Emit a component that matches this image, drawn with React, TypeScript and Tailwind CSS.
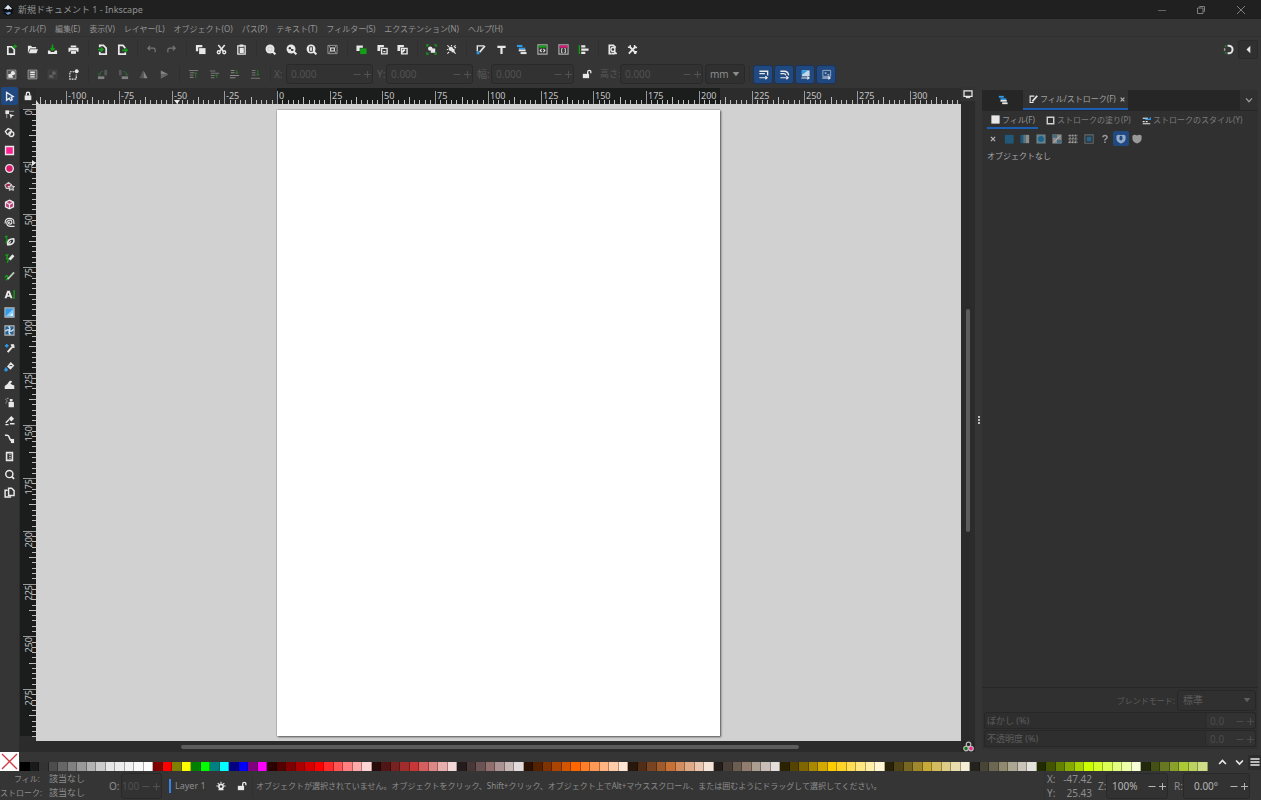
import React from 'react';

const W = '#e8e8e8';
const G = '#12a016';
const B = '#2f9bea';
const P = '#ff1f8f';

const shapes: Record<string, React.ReactNode> = {
  newDoc: (<><path d="M2 3h4l3 3v5H2z" fill="none" stroke={W} strokeWidth="1.9" /><path d="M9.800.5v4.500M7.500 2.700h4.500" stroke={G} strokeWidth="1.500" /></>),
  open: (<><path d="M1 10V2h3.500l1 1.300H10V5H3.200z" fill={W} /><path d="M3.600 5.800H12L10.300 10H2z" fill={W} /></>),
  save: (<><path d="M1 7h2.300l1 1.600h3.400L8.700 7H11v4H1z" fill={W} /><path d="M6 .5v6M3.800 4.500 6 6.800l2.200-2.300" stroke={G} strokeWidth="1.700" fill="none" /></>),
  print: (<><path d="M3 1.500h6v2H3zM.5 4.200h11v4.300H9.500V7h-7v1.500h-2z" fill={W} /><path d="M3.300 7.700h5.400v3H3.300z" fill={W} /></>),
  importDoc: (<><path d="M3 3.500V1.500h4l3 3V11H3V8.500" fill="none" stroke={W} strokeWidth="1.900" /><path d="M1 6h5M4.300 4l2.200 2-2.200 2" fill="none" stroke={G} strokeWidth="1.600" /></>),
  exportDoc: (<><path d="M9 4.500 6.500 1.500H2V11h7V9" fill="none" stroke={W} strokeWidth="1.900" /><path d="M5.500 6.800h5M9 4.800l2.200 2L9 8.800" fill="none" stroke={G} strokeWidth="1.600" /></>),
  undo: <path d="M4.500 2 2 4.500 4.500 7M2 4.500h6q2 0 2 2V9" fill="none" stroke="#777" strokeWidth="1.300" />,
  redo: <path d="M7.500 2 10 4.500 7.500 7M10 4.500H4q-2 0-2 2V9" fill="none" stroke="#777" strokeWidth="1.300" />,
  copy: (<><path d="M1 1h7v2.500H3.500V8H1z" fill={W} /><path d="M4.500 4.500H11.500V11H4.500z" fill={W} /></>),
  cut: (<><path d="M2.500 1 8 8M9.500 1 4 8" stroke={W} strokeWidth="1.700" /><circle cx="3" cy="9" r="1.600" fill="none" stroke={W} strokeWidth="1.500" /><circle cx="9" cy="9" r="1.600" fill="none" stroke={W} strokeWidth="1.500" /></>),
  paste: (<><path d="M2 2h8v9H2z" fill="none" stroke={W} strokeWidth="1.400" /><path d="M4 .500h4V3H4zM4 4.200h4.500v5.500H4z" fill={W} /></>),
  zoomSel: (<><circle cx="5.500" cy="5.500" r="4.900" fill={W} /><path d="m8.500 8.500 2.800 2.800" stroke={W} strokeWidth="2.200" /><path d="M3.500 3.500h4v4h-4z" fill="none" stroke="#bbb" strokeWidth=".6" /></>),
  zoomDraw: (<><circle cx="5.500" cy="5.500" r="4.900" fill={W} /><path d="m8.500 8.500 2.800 2.800" stroke={W} strokeWidth="2.200" /><circle cx="4.200" cy="4.500" r="1.300" fill="#333" /><path d="M5.500 5.500h2.500v2H5.500z" fill="#333" /></>),
  zoomPage: (<><circle cx="5.500" cy="5.500" r="4.900" fill={W} /><path d="m8.500 8.500 2.800 2.800" stroke={W} strokeWidth="2.200" /><path d="M4 3h3v5H4z" fill={W} stroke="#333" strokeWidth="1" /></>),
  zoomFit: (<><path d="M1 1.500h10v9H1z" fill="none" stroke="#999" strokeWidth="1" /><path d="M4 4.300h4v3.400H4z" fill="none" stroke={W} strokeWidth="1.200" /><path d="m2 2.500 1.500 1.300M10 2.500 8.500 3.800M2 9.500l1.500-1.300M10 9.500 8.500 8.200" stroke="#bbb" /></>),
  dup: (<><path d="M.5 1.500h7V4H4v3.500H.5z" fill={W} /><path d="M4.500 4.800h7V11h-7z" fill={G} /></>),
  clone: (<><path d="M.5 1h7v2.500H3.500V7.500H.5z" fill={W} /><path d="M5 4.800h6v6H5z" fill="none" stroke={W} strokeWidth="1.500" /><path d="M6.800 7.500h2.500v1.500H6.800z" fill={W} /></>),
  unclone: (<><path d="M.5 1h7v2.500H3.500V7.500H.5z" fill={W} /><path d="M5 4.800h6v6H5z" fill="none" stroke={W} strokeWidth="1.500" /><path d="m5.500 9 3-3" stroke={W} strokeWidth="2" /></>),
  group: (<><path d="M1 3V1h2M9 1h2v2M11 9v2H9M3 11H1V9" stroke={G} strokeWidth="1.500" fill="none" /><circle cx="4.600" cy="5" r="2.400" fill={W} /><path d="M6 5h4v4.500H5z" fill={W} /></>),
  ungroup: (<><path d="m1.500 1.500 2 2M10.500 1.500l-2 2M1.500 10.500l2-2M10.500 10.500l-2-2M6 1v1.500M1 6h1.500M9.500 4H11" stroke={W} strokeWidth="1.200" /><circle cx="5.300" cy="5.300" r="2.400" fill={W} /><path d="M6 5.300h3.300V9H6z" fill={W} /></>),
  fill: (<><path d="M2.500 8V2H10" fill="none" stroke={W} strokeWidth="1.500" /><path d="M10.800 2.200 5 9" stroke={W} strokeWidth="2" /><path d="M1.800 8h3v3.200h-3z" fill={B} /></>),
  fillSmall: (<><path d="M6 10H1.500V1.500H7" fill="none" stroke={W} strokeWidth="1.500" /><path d="M11 1 4.500 8.500" stroke={W} strokeWidth="2.200" /></>),
  text: <path d="M1.500 1.800h9v2.500H7.200v6.500H4.800V4.300H1.500z" fill={W} />,
  layers: (<><path d="M1 1h6v2.300H1z" fill={B} /><path d="M3 4h7v2H3z" fill={B} /><path d="M3 6h7.500v2H3z" fill={W} /><path d="M5 8.800h6.500V11H5z" fill={W} /></>),
  xml: (<><path d="M1 1h10v10H1z" fill="none" stroke="#aaa" strokeWidth="1.300" /><path d="M1.600 1.600h8.800v2.400H1.600z" fill={G} /><path d="M5 5.300 3.500 7 5 8.800M7 5.300 8.500 7 7 8.800" fill="none" stroke={W} strokeWidth="1.200" /></>),
  selectors: (<><path d="M1 1h10v10H1z" fill="none" stroke="#aaa" strokeWidth="1.300" /><path d="M1.600 1.600h8.800v2.400H1.600z" fill="#e0187c" /><path d="M5 5H4v4.500h1M7 5h1v4.500H7" fill="none" stroke={W} /></>),
  align: (<><path d="M1.500 1v10" stroke={G} strokeWidth="1.500" /><path d="M3.500 1.300H8v2.400H3.500zM3.500 4.800H11.500v2.500h-8zM3.500 8.400H8v2.400H3.500z" fill={W} /></>),
  docProps: (<><path d="M5 10.500H2.500v-9H7l2.500 2.500" fill="none" stroke={W} strokeWidth="1.800" /><circle cx="6.500" cy="6" r="2.200" fill="none" stroke={W} strokeWidth="1.500" /><path d="m7.500 7.500 3 3.300M5 10.500h4" stroke={W} strokeWidth="1.700" /></>),
  prefs: (<><path d="m3 3 7 7.500M9.500 2.500 2 10.500" stroke={W} strokeWidth="2" /><path d="M1 3.500h2.500V1M8.200 1v2.800H11M11 8.500H8.500V11" fill="none" stroke={W} strokeWidth="1.500" /></>),
  selAll: (<><path d="M1.200 1.200h9.600v9.600H1.200z" fill="#555" stroke="#999" /><circle cx="7.500" cy="4.500" r="2.300" fill={W} /><path d="M2.500 5.500H6l2 4H2.500z" fill={W} /></>),
  selLayers: (<><path d="M1.200 1.200h9.600v9.600H1.200z" fill="#555" stroke="#999" /><path d="M3.500 2.800h5v1.500h-5zM3.500 5.300h5v1.500h-5zM3.500 7.800h5v1.500h-5z" fill={W} /></>),
  desel: (<><path d="M1.200 1.200h9.600v9.600H1.200z" fill="#3c3c3c" stroke="#444" /><circle cx="7.500" cy="4.500" r="2" fill="#626262" /><path d="M2.500 6.500H6l1.500 3h-5z" fill="#626262" /></>),
  touch: (<><path d="M7 3H2v8h7V6" fill="none" stroke={W} strokeWidth="1.300" strokeDasharray="2 1" /><circle cx="9.500" cy="2.500" r="2.100" fill={W} /></>),
  rotL: (<><path d="M1 8h7v3H1z" fill="#808080" /><path d="M8 1h3v6H8z" fill="#555" /><path d="M2.500 6.500q0-4 4-4M1 5l1.500 2L4.500 5" stroke="#2d6a30" fill="none" /></>),
  rotR: (<><path d="M4 8h7v3H4z" fill="#808080" /><path d="M1 1h3v6H1z" fill="#555" /><path d="M9.500 6.500q0-4-4-4M11 5 9.500 7 7.500 5" stroke="#2d6a30" fill="none" /></>),
  flipH: (<><path d="M5.500 1.500V10H1.500z" fill="#555" /><path d="M6 1.500V10h4.500z" fill="#858585" /></>),
  flipV: (<><path d="M2 6h8.500L2 1.500z" fill="#858585" /><path d="M2 6h8.500L2 10.500z" fill="#666" /></>),
  top: (<><path d="M1 1h10v1.200H1zM2 3.500h5v1.200H2zM2 6h4v1.200H2zM2 8.500h4v1.200H2z" fill="#777" /><path d="M8.500 10V4M7 5.500 8.500 4 10 5.500" stroke="#2d7a30" fill="none" /></>),
  raise: (<><path d="M1 1.500h6v1.200H1zM2 4h9v1.200H2zM2 6.500h4v1.200H2zM2 9h4v1.200H2z" fill="#777" /><path d="M8.500 10V6M7 7.500 8.500 6 10 7.500" stroke="#2d7a30" fill="none" /></>),
  lower: (<><path d="M2 1h4v1.200H2zM2 3.500h4v1.200H2zM1 6.500h10v1.200H1zM1 9h6v1.200H1z" fill="#888" /><path d="M8.500 1v4M7 3.500 8.500 5 10 3.500" stroke="#2d7a30" fill="none" /></>),
  bottom: (<><path d="M2 1h4v1.200H2zM2 3.500h4v1.200H2zM2 6h4v1.200H2zM1 9.500h10v1.200H1z" fill="#777" /><path d="M8.500 1v6M7 5.500 8.500 7 10 5.500" stroke="#2d7a30" fill="none" /></>),
  unlock: (<><path d="M1 5.800h7.500V11H1z" fill={W} /><path d="M6.800 6V3.500q0-1.900 1.900-1.900t1.900 1.900V5" fill="none" stroke={W} strokeWidth="1.600" /></>),
  lock: (<><path d="M2 5.300h8V11H2z" fill={W} /><path d="M4 5.500V3.500q0-2 2-2t2 2v2" fill="none" stroke={W} strokeWidth="1.600" /></>),
  scaleStroke: (<><path d="M1.500 2.500h9v4.500M1.500 5h6" stroke={W} fill="none" strokeWidth="1.500" /><path d="M1.500 9.500h8M8 7.800l2 1.700L8 11.200" stroke={W} fill="none" strokeWidth="1.200" /></>),
  scaleCorner: (<><path d="M1.500 2.500H6q4 0 4.500 4.500M1.500 5h3.500q2 0 2.500 2" stroke={W} fill="none" strokeWidth="1.500" /><path d="M1.500 9.500h8M8 7.800l2 1.700L8 11.200" stroke={W} fill="none" strokeWidth="1.200" /></>),
  moveGrad: (<><path d="M2 1.500h8.500V8H2z" fill="#c9d6e4" /><path d="M2 1.500h6.500L2 6.500z" fill={B} /><path d="M1.500 9.800h8M8 8.300l2 1.500-2 1.500" stroke={W} fill="none" strokeWidth="1.100" /></>),
  movePat: (<><path d="M2 1.500h8.500V8H2z" fill="none" stroke="#9fb0c6" strokeWidth="1" /><path d="M4 3.500h2v2H4zM7 5.500h2v1.500H7z" fill="#9fb0c6" /><path d="M1.500 9.800h8M8 8.300l2 1.500-2 1.500" stroke={W} fill="none" strokeWidth="1.100" /></>),
  select: <path d="M2.800 1.500 10 6 7.800 6.800 9 9.500 7.200 10.500 5.800 8 2.800 10z" fill="none" stroke={W} strokeWidth="1.500" />,
  node: (<><path d="M1.500 1.500h4v4h-4z" fill={W} /><path d="M5.500 2.500H11M3 5.500V10" stroke="#aaa" fill="none" /><path d="M6 5.500 11.500 7 8.500 8l-1 3z" fill={W} /></>),
  shape: (<><path d="M1.500 5 4.500 1.800 8 3.500l-1 4L3.500 8z" fill="none" stroke={W} strokeWidth="1.500" /><circle cx="8" cy="7.700" r="2.700" fill="none" stroke={W} strokeWidth="1.500" /></>),
  rect: <path d="M1.700 1.700h8.600v8.600H1.700z" fill={P} stroke={W} strokeWidth="1.500" />,
  ellipse: <circle cx="6" cy="6" r="4.200" fill="#d81b6f" stroke={W} strokeWidth="1.500" />,
  star: (<><path d="M1 4.500 5 1.500 8 4 7 8H2.500z" fill="#a02c50" stroke="#ccc" strokeWidth="1.200" /><path d="m8 3.800 1.100 2 2.400.2-1.600 1.800.4 2.400-2.300-.9-2.300.9.400-2.400L4.500 6l2.400-.2z" fill="#777" stroke={W} /></>),
  box3d: (<><path d="M6 1.200 10.400 3.500v5L6 10.800 1.600 8.500v-5z" fill="#c0407c" stroke={W} strokeWidth="1.300" /><path d="M2 3.500 6 6l4-2.500M6 6v4.500" stroke={W} fill="none" strokeWidth="1.200" /></>),
  spiral: <path d="M6.500 6q-1-1-1.500.2t1.500 1.600Q9 7.500 8.500 5.200T5.500 3.500 3 6.800 6.500 10.200H11.500M1.200 7Q1 1.500 6 1.500T10.800 6v1.500" fill="none" stroke={W} strokeWidth="1.200" />,
  pen: (<><path d="M1.500 1 3.500 5 2 9M1 1.500h3" stroke={G} strokeWidth="1.400" fill="none" /><path d="M4 10.500q-.5-6.500 6.500-6.500 1.500 5.500-4 6.500z" fill="none" stroke={W} strokeWidth="1.700" /><path d="m4 10.500 3.500-3.500" stroke={W} strokeWidth="1.300" /></>),
  pencil: (<><path d="M1.500 2.500 4 2l-1 4 2 1-1.500 3.500" stroke={G} strokeWidth="1.600" fill="none" /><path d="M10.300 2.500 6 7.300" stroke={W} strokeWidth="3" /></>),
  callig: (<><path d="M1 7q2-3 3-1T2 10" stroke={G} strokeWidth="1.600" fill="none" /><path d="M11 1.500 4 9" stroke="#bcd0bc" strokeWidth="1.900" /></>),
  textTool: (<><path d="M3.500 2h2.800L9.300 10.200H7.100l-.6-1.700H3.400L2.800 10.200H.6zM4.900 4.200 4 6.900h1.800z" fill={W} fillRule="evenodd" /><path d="M11 1v10" stroke={G} strokeWidth="1.500" /></>),
  gradient: (<><path d="M1 1h10v10H1z" fill={B} stroke="#b5b5b5" strokeWidth="1.200" /><path d="M10.200 2v8.200H2z" fill="#8fccf7" /><path d="M9.500 6.500v3h-3z" fill="#fff" /></>),
  mesh: (<><path d="M1 1h10v10H1z" fill="#255f90" stroke="#b5b5b5" strokeWidth="1.200" /><path d="M1.500 7q2.500-3 4.500-1t4.500-1.500M5 1.500q2.500 2 1 4.500t1 4.500" stroke="#cfe6f8" fill="none" strokeWidth="1.400" /></>),
  dropper: (<><path d="M3 1v4M1 3h4" stroke={B} strokeWidth="1.700" /><path d="M4 10 9.800 3.500" stroke={W} strokeWidth="2.100" /><path d="M7.500 2 11 5.500 10.700 1.800z" fill={W} stroke={W} /></>),
  bucket: (<><path d="M7.300 1 11.300 4.800 7 9.500 3.300 6z" fill={W} /><path d="M6 5h3" stroke="#333" /><path d="M2.200 7q3 3.800 0 4t0-4" fill={B} stroke={B} /></>),
  tweak: <path d="M.8 10.800V7.500Q4 6 5 3.500 7 .8 9 3L7 5q1.500 1.500 4.200 2v3.800z" fill={W} />,
  spray: (<><path d="M5 5.500H10.800V11.200H5zM6.300 2.300h3v2.500h-3z" fill={W} /><path d="M1.500 2.500h1.300M3.500 1.500h1.300M2.500 4.500h1.300M1.500 6.500h1.300" stroke="#aaa" strokeWidth="1.200" /></>),
  eraser: (<><path d="M8 1 11 4 8 7 5 4z" fill={W} /><path d="M5.500 5 2 8.500M1.500 10.500H5M6.500 9.500H11.500" stroke={W} strokeWidth="1.500" /></>),
  connector: (<><path d="M1 2.500h2.500q1.500 0 2.500 3t3 3" fill="none" stroke={W} strokeWidth="1.700" /><path d="M7.500 6.500h3.500V11H7.500z" fill={W} /></>),
  measure: (<><path d="M2.800 1.800h6.400v8.400H2.800z" fill="none" stroke={W} strokeWidth="1.700" /><path d="M5.500 4h2M5.500 6h2M5.500 8h2" stroke="#bbb" /></>),
  zoom: (<><circle cx="5.800" cy="5.500" r="3.900" fill="none" stroke={W} strokeWidth="1.600" /><path d="M8.300 8 11 10.800" stroke={W} strokeWidth="1.900" /></>),
  pages: (<><path d="M4 3.500H1.200v7.300H7V10" fill="none" stroke={W} strokeWidth="1.600" /><path d="M5 1.300h3.300l2.700 2.700v5.300H5z" fill="none" stroke={W} strokeWidth="1.600" /></>),
  snap: (<><path d="M5 1.800h1.200a4.200 4.200 0 0 1 0 8.400H5" fill="none" stroke={W} strokeWidth="2.200" /><path d="M2 2l1.700.5M2 10l1.700-.5" stroke={G} strokeWidth="1.400" /><path d="M1 4.500h1.500v3H1z" fill="#999" /></>),
  triLeft: <path d="M8 2v8L3.800 6z" fill={W} />,
  monitor: (<><path d="M1.200 2.200h9.600v6.500H1.200z" fill="none" stroke={W} strokeWidth="1.500" /><path d="M3.500 10.300h5" stroke={W} strokeWidth="1.300" /></>),
  cms: (<><circle cx="6" cy="3.700" r="2.500" fill="none" stroke="#bbb" strokeWidth="1.300" /><circle cx="3.300" cy="8.200" r="2.500" fill="#117a14" stroke="#bbb" strokeWidth="1.300" /><circle cx="8.700" cy="8.200" r="2.500" fill={P} stroke="#bbb" strokeWidth="1.300" /></>),
  x: <path d="m3.500 3.500 5 5M8.500 3.500l-5 5" stroke="#b5b5b5" strokeWidth="1.500" />,
  flat: <path d="M1 1h10.500v10.500H1z" fill="#21587a" />,
  linear: (<><path d="M.5 1h4v10h-4z" fill="#21587a" /><path d="M4 1h3v10H4z" fill="#587886" /><path d="M7 1h4v10H7z" fill="#8c8c8c" /></>),
  radial: (<><path d="M.5.5h11v11H.5z" fill="#66808c" /><circle cx="6" cy="6" r="3.600" fill="#1f6288" /></>),
  meshFill: (<><path d="M.5.5h11v11H.5z" fill="#8b8b8b" /><path d="M.5.5h5.500v4H.5zM6 7h5.500v4.500H6z" fill="#456b80" /><path d="m2 10 7-7" stroke="#bbb" /></>),
  pattern: <path d="M.5 2h11M.5 6h11M.5 10h11M2.500.5v11M6 .5v11M9.500.5v11" stroke="#a5a5a5" strokeDasharray="2.500 1" strokeWidth="1.300" />,
  swatch: (<><path d="M1 1h10v10H1z" fill="none" stroke="#5f6a72" strokeWidth="1.300" /><path d="M3.200 3.200h5.600v5.600H3.200z" fill="#24668a" /></>),
  unknown: (<><path d="M3.500 4q0-2.300 2.500-2.300T8.500 4q0 1.200-1.400 1.800T6 7.800" fill="none" stroke="#999" strokeWidth="1.800" /><path d="M5 9h1.900v1.800H5z" fill="#999" /></>),
  evenOdd: (<><path d="M.5 2Q3 0 6 1.500 9 0 11.500 2V6q-.5 4-5.500 5.500Q1 10 .5 6z" fill="#93abc9" /><path d="M4.700 2.500h2.600L8 6 6 8 4 6z" fill="#1f4a80" /></>),
  nonZero: <path d="M.5 2Q3 0 6 1.800 9 0 11.500 2V6q-.5 4-5.500 5.500Q1 10 .5 6z" fill="#999" />,
  whiteBox: <path d="M.5.5h11v11H.5z" fill={W} />,
  strokeBox: <path d="M1.700 1.700h8.600v8.600H1.700z" fill="none" stroke="#cfcfcf" strokeWidth="1.900" />,
  strokeStyle: (<><path d="M1 3h7" stroke={W} strokeWidth="1.500" /><path d="M4.500 4.500H11V1.500" stroke={B} strokeWidth="1.800" fill="none" /><path d="M1 7.500h2.500M5 7.500h2.500M1 10.300h10" stroke={W} strokeWidth="1.500" /></>),
  eye: (<><circle cx="6" cy="6.500" r="3.500" fill={W} /><circle cx="6" cy="6.500" r="1.500" fill="#333" /><path d="M.5 6h2M9.500 6h2M2 2.500 3.800 4M10 2.500 8.200 4M6 1v2M3 10.300h6" stroke={W} strokeWidth="1.300" /></>),
  up: <path d="m2.300 7.700 3.700-4 3.700 4" fill="none" stroke={W} strokeWidth="1.800" />,
  down: <path d="M2.300 3.800 6 7.800l3.700-4" fill="none" stroke={W} strokeWidth="1.800" />,
  menu: <path d="M.5 2.500h11M.5 6h11M.5 9.500h11" stroke={W} strokeWidth="1.800" />,
};

function Icon({ name, className = 'size-3' }: { name: string; className?: string }) {
  return <svg viewBox="0 0 12 12" className={`${className} shrink-0`} aria-hidden="true">{shapes[name]}</svg>;
}

function IconButton({ name, className = '', icon = 'size-[11px]' }: { name: string; className?: string; icon?: string }) {
  return (
    <button type="button" aria-label={name} className={`flex items-center justify-center ${className}`}>
      <Icon name={name} className={icon} />
    </button>
  );
}

function Group({ icons, className }: { icons: string[]; className: string }) {
  return (
    <div className={`flex h-full shrink-0 ${className}`}>
      {icons.map((n) => <IconButton key={n} name={n} className="h-full flex-1" />)}
    </div>
  );
}

const Sep = () => <div className="flex h-4 w-2 shrink-0 justify-center"><div className="w-px bg-[#2f2f2f]" /></div>;

function Spin({ label, value, className, tone, pad = 'pl-1' }: { label: string; value: string; className: string; tone: string; pad?: string }) {
  return (
    <div className={`flex shrink-0 items-center rounded-[3px] border border-[#292929] bg-[#323232] ${className} ${tone}`}>
      <input aria-label={label} defaultValue={value} className={`h-full min-w-0 flex-1 bg-transparent text-[10px] outline-none ${pad}`} />
      <button type="button" aria-label={`${label} −`} className="flex h-full w-[10px] shrink-0 items-center justify-center">
        <svg viewBox="0 0 8 8" className="size-2"><path d="M.5 4.500h7" stroke="currentColor" /></svg>
      </button>
      <button type="button" aria-label={`${label} +`} className="flex h-full w-[10px] shrink-0 items-center justify-center">
        <svg viewBox="0 0 8 8" className="size-2"><path d="M1 4.500h7M4.500 1v7" stroke="currentColor" /></svg>
      </button>
    </div>
  );
}

function Triangle() {
  return <svg viewBox="0 0 8 6" className="pointer-events-none absolute right-1 h-[5px] w-2"><path d="M0 0h8L4 5z" fill="currentColor" /></svg>;
}

const STEP = 52.73;
const ticks = (from: number, to: number) => {
  const out: { pos: number; kind: number; label: number }[] = [];
  for (let i = from; i <= to; i++) {
    const m = ((i % 10) + 10) % 10;
    out.push({ pos: (i * STEP) / 10, kind: m === 0 ? 2 : m === 5 ? 1 : 0, label: i * 2.5 });
  }
  return out;
};
const LEN = [4, 7, 13];

function TopRuler() {
  return (
    <svg className="h-4 w-full shrink-0 bg-[#2c2c2c]" aria-label="ruler">
      <rect x="241" y="0" width="443" height="16" fill="#1b1d1d" />
      {ticks(-45, 129).map((t) => (
        <g key={t.label}>
          <rect x={Math.round(241 + t.pos)} y={16 - LEN[t.kind]} width="1" height={LEN[t.kind]} fill={t.kind === 2 ? '#9a9a9a' : '#bdbdbd'} />
          {t.kind === 2 && <text x={Math.round(243 + t.pos)} y="11" className="fill-[#c4c4c4] text-[9px]">{t.label}</text>}
        </g>
      ))}
      <path d="M138 12h6l-3 4zM0 12v4h3z" fill="#e8e8e8" />
    </svg>
  );
}

function SideRuler() {
  return (
    <svg className="h-full w-4 bg-[#2c2c2c]" aria-label="ruler">
      <rect x="0" y="5" width="16" height="627" fill="#1b1d1d" />
      {ticks(-1, 119).map((t) => {
        const y = Math.round(5 + t.pos);
        return (
          <g key={t.label}>
            <rect x={16 - LEN[t.kind]} y={y} width={LEN[t.kind]} height="1" fill={t.kind === 2 ? '#9a9a9a' : '#bdbdbd'} />
            {t.kind === 2 && <text x="0" y="0" textAnchor="end" transform={`translate(12 ${y + 1}) rotate(-90)`} className="fill-[#c4c4c4] text-[9px]">{t.label}</text>}
          </g>
        );
      })}
      <path d="M12 56v6l4-3z" fill="#e8e8e8" />
    </svg>
  );
}

const menus = ['ファイル(F)', '編集(E)', '表示(V)', 'レイヤー(L)', 'オブジェクト(O)', 'パス(P)', 'テキスト(T)', 'フィルター(S)', 'エクステンション(N)', 'ヘルプ(H)'];

const tools = ['select', 'node', 'shape', 'rect', 'ellipse', 'star', 'box3d', 'spiral', 'pen', 'pencil', 'callig', 'textTool', 'gradient', 'mesh', 'dropper', 'bucket', 'tweak', 'spray', 'eraser', 'connector', 'measure', 'zoom', 'pages'];

const palette = (
  '000000 1a1a1a 333333 4d4d4d 666666 808080 999999 b3b3b3 cccccc e6e6e6 ececec f2f2f2 f9f9f9 ffffff ' +
  '800000 ff0000 808000 ffff00 008000 00ff00 008080 00ffff 000080 0000ff 800080 ff00ff ' +
  '2b0000 550000 800000 aa0000 d40000 ff0000 ff2a2a ff5555 ff8080 ffaaaa ffd5d5 ' +
  '280b0b 501616 782121 a02c2c c83737 d35f5f de8787 e9afaf f4d7d7 ' +
  '241c1c 483737 6c5353 916f6f ac9393 c8b7b7 e3dbdb ' +
  '2b1100 552200 803300 aa4400 d45500 ff6600 ff7f2a ff9955 ffb380 ffccaa ffe6d5 ' +
  '28170b 502d16 784421 a05a2c c87137 d38d5f deaa87 e9c6af f4e3d7 ' +
  '241f1c 483e37 6c5d53 917c6f ac9d93 c8beb7 e3dedb ' +
  '2b2200 554400 806600 aa8800 d4aa00 ffcc00 ffd42a ffdd55 ffe680 ffeeaa fff6d5 ' +
  '28220b 504416 786721 a0892c c8ab37 d3bc5f decd87 e9ddaf f4eed7 ' +
  '24221c 484537 6c6753 918a6f aca793 c8c4b7 e3e2db ' +
  '222b00 445500 668000 88aa00 aad400 ccff00 d4ff2a ddff55 e5ff80 eeffaa f6ffd5 ' +
  '22280b 445016 677821 89a02c abc837 bcd35f cdde87'
).split(' ');

function TitleBar() {
  return (
    <header className="flex h-[19px] shrink-0 items-center bg-[#202020] text-[#929292]">
      <svg viewBox="0 0 12 12" className="ml-[2px] size-3">
        <path d="M6 0 12 5.500 10 7.500 11.500 8.800 6 12 1 9.500l2-1.200L0 6z" fill="#0a0d12" />
        <path d="M6 .8 10 4.800 8.500 5.500 7.200 4.500 6 6 4.500 4.700 2 5z" fill="#dfe6ee" />
        <path d="M3 8.500 6 11l3.500-2-2.500-1.200-2 .7z" fill="#6b8fbf" />
      </svg>
      <h1 className="ml-1 flex-1 text-[9px]">新規ドキュメント 1 - Inkscape</h1>
      <button type="button" aria-label="最小化" className="flex h-full w-[39px] items-center justify-center"><svg viewBox="0 0 10 10" className="size-[10px]"><path d="M1 5.500h8" stroke="#666" /></svg></button>
      <button type="button" aria-label="元に戻す" className="flex h-full w-[39px] items-center justify-center"><svg viewBox="0 0 10 10" className="size-[10px]"><path d="M1.500 3h5.500v5.500H1.500zM3.500 2.500V1.500h5v5H7.500" fill="none" stroke="#7d7d7d" /></svg></button>
      <button type="button" aria-label="閉じる" className="flex h-full w-[41px] items-center justify-center"><svg viewBox="0 0 10 10" className="size-[10px]"><path d="m1 1 8 8M9 1 1 9" stroke="#7d7d7d" /></svg></button>
    </header>
  );
}

function Commands() {
  return (
    <div className="flex h-[25px] shrink-0 items-center pb-px pl-px">
      <Group className="w-[83px]" icons={['newDoc', 'open', 'save', 'print']} /><Sep />
      <Group className="w-[41px]" icons={['importDoc', 'exportDoc']} /><Sep />
      <Group className="w-[41px]" icons={['undo', 'redo']} /><Sep />
      <Group className="w-[62px]" icons={['copy', 'cut', 'paste']} /><Sep />
      <Group className="w-[83px]" icons={['zoomSel', 'zoomDraw', 'zoomPage', 'zoomFit']} /><Sep />
      <Group className="w-[62px]" icons={['dup', 'clone', 'unclone']} /><Sep />
      <Group className="w-[41px]" icons={['group', 'ungroup']} /><Sep />
      <Group className="w-[124px]" icons={['fill', 'text', 'layers', 'xml', 'selectors', 'align']} /><Sep />
      <Group className="w-[41px]" icons={['docProps', 'prefs']} />
      <IconButton name="snap" className="ml-auto h-5 w-5" />
      <IconButton name="triLeft" className="mr-[3px] h-[19px] w-5 rounded-[3px] border border-[#2a2a2a] bg-[#303030]" />
    </div>
  );
}

function ToolControls() {
  const lab = 'shrink-0 text-[#585858]';
  return (
    <div className="flex h-[25px] shrink-0 items-center pb-px pl-px">
      <Group className="w-[83px]" icons={['selAll', 'selLayers', 'desel', 'touch']} /><Sep />
      <Group className="w-[83px]" icons={['rotL', 'rotR', 'flipH', 'flipV']} /><Sep />
      <Group className="w-[83px]" icons={['top', 'raise', 'lower', 'bottom']} /><Sep />
      <span className={`${lab} w-3 text-[10px]`}>X:</span>
      <Spin label="X" value="0.000" className="h-5 w-[87px]" tone="text-[#515151]" />
      <span className={`${lab} ml-1 w-[9px] text-[10px]`}>Y:</span>
      <Spin label="Y" value="0.000" className="h-5 w-[87px]" tone="text-[#515151]" />
      <span className={`${lab} ml-1 w-[14px] text-[10px]`}>幅:</span>
      <Spin label="幅" value="0.000" className="h-5 w-[83px]" tone="text-[#515151]" />
      <IconButton name="unlock" className="h-5 w-[26px]" icon="size-[10px]" />
      <span className={`${lab} w-[20px] text-[9px] whitespace-nowrap`}>高さ:</span>
      <Spin label="高さ" value="0.000" className="h-5 w-[83px]" tone="text-[#515151]" />
      <div className="relative ml-[2px] flex h-5 w-10 shrink-0 items-center rounded-[3px] border border-[#292929] bg-[#303030] text-[#8d8d8d]">
        <select aria-label="単位" className="h-full w-full appearance-none bg-transparent pl-1 text-[10px] outline-none"><option>mm</option></select>
        <Triangle />
      </div>
      <Sep />
      <div className="flex gap-px">
        {['scaleStroke', 'scaleCorner', 'moveGrad', 'movePat'].map((n) => (
          <IconButton key={n} name={n} className="h-[19px] w-5 rounded-[3px] border border-[#1a3356] bg-[#1f4980]" />
        ))}
      </div>
    </div>
  );
}

function Slider({ label }: { label: string }) {
  return (
    <div className="flex h-[17px] items-center rounded-[2px] border border-[#272727] bg-[#2e2e2e] text-[#5e5e5e]">
      <span className="flex-1 pl-[2px] text-[9px]">{label}</span>
      <Spin label={label} value="0.0" className="h-[15px] w-[50px] border-y-0 border-r-0" tone="text-[#4c4c4c]" />
    </div>
  );
}

function Dock() {
  return (
    <aside className="mt-[3px] mr-[3px] mb-[3px] flex w-[276px] shrink-0 flex-col bg-[#303030] text-[8px]">
      <div className="flex h-[21px] shrink-0 border-b border-[#272727] bg-[#262626]">
        <IconButton name="layers" className="w-[41px]" icon="size-[10px]" />
        <button type="button" className="flex w-[105px] items-center gap-[2px] border-b-2 border-[#1a5fb4] bg-[#323232] pl-[6px] whitespace-nowrap text-[#a0a0a0]">
          <Icon name="fillSmall" className="size-[9px]" />フィル/ストローク(F)<Icon name="x" className="size-[9px]" />
        </button>
        <button type="button" aria-label="タブ一覧" className="ml-auto flex w-[18px] items-center justify-center bg-[#303030]">
          <svg viewBox="0 0 12 12" className="size-[10px]"><path d="M2.500 4 6 8l3.500-4" fill="none" stroke="#9a9a9a" strokeWidth="1.600" /></svg>
        </button>
      </div>
      <div className="flex h-[18px] shrink-0 items-stretch pl-[5px] whitespace-nowrap text-[#7c7c7c]">
        <button type="button" className="flex w-[51px] items-center gap-[2px] border-b-2 border-[#1a5fb4] pt-px pl-1 text-[#959595]"><Icon name="whiteBox" className="size-[9px]" />フィル(F)</button>
        <button type="button" className="ml-2 flex w-[88px] items-center gap-[2px]"><Icon name="strokeBox" className="size-[9px]" />ストロークの塗り(P)</button>
        <button type="button" className="ml-2 flex items-center gap-[2px]"><Icon name="strokeStyle" className="size-[9px]" />ストロークのスタイル(Y)</button>
      </div>
      <div className="flex h-[19px] shrink-0 items-center pl-[3px]">
        {['x', 'flat', 'linear', 'radial', 'meshFill', 'pattern', 'swatch', 'unknown', 'evenOdd', 'nonZero'].map((n) => (
          <IconButton key={n} name={n} className={n === 'evenOdd' ? 'h-[15px] w-4 rounded-[2px] bg-[#1f4980]' : 'h-[15px] w-4'} icon="size-[10px]" />
        ))}
      </div>
      <p className="pt-[2px] pl-[5px] text-[#aaaaaa]">オブジェクトなし</p>
      <div className="flex-1 border-b border-[#272727]" />
      <div className="flex shrink-0 flex-col gap-px px-[2px] pt-[2px] pb-[2px]">
        <div className="flex items-center justify-end text-[#5e5e5e]">
          <label htmlFor="blend" className="mr-[2px]">ブレンドモード:</label>
          <div className="relative flex h-[21px] w-[79px] items-center rounded-[3px] border border-[#272727]">
            <select id="blend" className="h-full w-full appearance-none bg-transparent pl-[5px] text-[10px] outline-none"><option>標準</option></select>
            <Triangle />
          </div>
        </div>
        <Slider label="ぼかし (%)" />
        <Slider label="不透明度 (%)" />
      </div>
    </aside>
  );
}

function Workspace() {
  return (
    <main className="flex min-h-0 flex-1">
      <nav className="flex w-5 shrink-0 flex-col items-center border-r border-[#2b2b2b] pr-px">
        {tools.map((n, i) => (
          <IconButton key={n} name={n} className={i === 0 ? 'h-[18px] w-[17px] rounded-[2px] bg-[#1f4980]' : 'h-[18px] w-[17px]'} />
        ))}
      </nav>
      <div className="flex min-w-0 flex-1 flex-col">
        <div className="flex min-h-0 flex-1">
          <div className="flex w-4 shrink-0 flex-col pt-px">
            <IconButton name="lock" className="h-4 w-4 shrink-0 bg-[#2a2a2a]" icon="size-[10px]" />
            <div className="min-h-0 flex-1"><SideRuler /></div>
          </div>
          <div className="flex min-w-0 flex-1 flex-col pt-px">
            <TopRuler />
            <div className="relative min-h-0 flex-1 overflow-hidden bg-[#d1d1d1]">
              <div className="absolute top-[6px] left-[241px] h-[626px] w-[443px] bg-white shadow-[1px_1px_2px_#555,0_0_1px_#555]" />
            </div>
          </div>
          <div className="flex w-[14px] shrink-0 flex-col items-center bg-[#2b2b2b]">
            <IconButton name="monitor" className="h-[14px] w-[14px] bg-[#333]" icon="size-[10px]" />
            <div className="mt-[208px] h-[223px] w-1 rounded-full bg-[#5c5c5c]" />
          </div>
        </div>
        <div className="flex h-[11px] shrink-0 items-center bg-[#2b2b2b] pl-[161px]">
          <div className="h-1 w-[618px] rounded-full bg-[#5c5c5c]" />
          <IconButton name="cms" className="ml-auto h-[11px] w-[14px] bg-[#262626]" icon="size-[11px]" />
        </div>
      </div>
      <div className="flex w-[7px] shrink-0 flex-col items-center justify-center gap-px">
        <i className="size-[2px] bg-[#bbb]" /><i className="size-[2px] bg-[#bbb]" /><i className="size-[2px] bg-[#bbb]" />
      </div>
      <Dock />
    </main>
  );
}

function PaletteBar() {
  return (
    <div className="flex h-5 shrink-0 items-end">
      <button type="button" aria-label="なし" className="mr-px h-[19px] w-[19px] shrink-0 self-start bg-white">
        <svg viewBox="0 0 19 19" className="size-full"><path d="m2 2 15 15M17 2 2 17" stroke="#cf3c44" strokeWidth="1.400" /></svg>
      </button>
      <div className="mb-px flex h-[9px] flex-1">
        {palette.map((c, i) => (
          <button type="button" key={i} aria-label={`#${c}`} className="h-full flex-1 border-r border-black/30" style={{ backgroundColor: `#${c}` }} />
        ))}
      </div>
      <div className="flex w-[54px] shrink-0 items-center justify-end">
        <IconButton name="up" className="h-5 w-[18px]" />
        <IconButton name="down" className="h-5 w-[17px]" />
        <IconButton name="menu" className="h-[15px] w-[13px] bg-[#2c2c2c]" icon="size-[10px]" />
      </div>
    </div>
  );
}

function StatusBar() {
  return (
    <footer className="flex h-7 shrink-0 items-center text-[10px] text-[#8e8e8e]">
      <dl className="grid w-[100px] shrink-0 grid-cols-[40px_1fr] gap-x-[9px] text-[9px] leading-[14px] whitespace-nowrap">
        <dt className="text-right text-[8px]">フィル:</dt><dd>該当なし</dd>
        <dt className="text-right text-[8px]">ストローク:</dt><dd>該当なし</dd>
      </dl>
      <span className="ml-[9px] w-3 shrink-0">O:</span>
      <Spin label="O" value="100" className="h-[26px] w-[41px]" tone="text-[#505050]" pad="pl-0" />
      <span className="ml-[7px] h-[14px] w-[2px] shrink-0 bg-[#3584e4]" />
      <span className="ml-1 w-[38px] shrink-0 text-[9px] whitespace-nowrap">Layer 1</span>
      <IconButton name="eye" className="h-5 w-4" icon="size-[10px]" />
      <IconButton name="unlock" className="ml-[3px] h-5 w-5" icon="size-[10px]" />
      <p className="h-6 min-w-0 flex-1 overflow-hidden border-l border-[#303030] pl-[3px] text-[8px] leading-6 whitespace-nowrap">
        オブジェクトが選択されていません。オブジェクトをクリック、Shift+クリック、オブジェクト上でAlt+マウススクロール、または囲むようにドラッグして選択してください。
      </p>
      <dl className="grid w-[50px] shrink-0 grid-cols-[10px_1fr] border-l border-[#303030] pr-[2px] pl-[2px] text-[10px] leading-[14px]">
        <dt>X:</dt><dd className="text-right">-47.42</dd>
        <dt>Y:</dt><dd className="text-right">25.43</dd>
      </dl>
      <span className="ml-1 w-2 shrink-0">Z:</span>
      <Spin label="Z" value="100%" className="h-[26px] w-[62px]" tone="text-[#b5b5b5]" pad="pl-[5px]" />
      <span className="ml-[6px] w-[9px] shrink-0">R:</span>
      <Spin label="R" value="0.00°" className="mr-[11px] h-[26px] w-[67px]" tone="text-[#b5b5b5]" pad="pl-[10px]" />
    </footer>
  );
}

export default function App() {
  return (
    <div className="flex h-screen flex-col overflow-hidden bg-[#353535] font-['Noto_Sans','Noto_Sans_CJK_JP',sans-serif]">
      <TitleBar />
      <nav className="flex h-[18px] shrink-0 items-center gap-[9px] border-b border-[#303030] pt-[2px] pl-[5px] text-[8px] whitespace-nowrap text-[#949494]">
        {menus.map((m) => <button type="button" key={m}>{m}</button>)}
      </nav>
      <Commands />
      <ToolControls />
      <Workspace />
      <PaletteBar />
      <StatusBar />
    </div>
  );
}
